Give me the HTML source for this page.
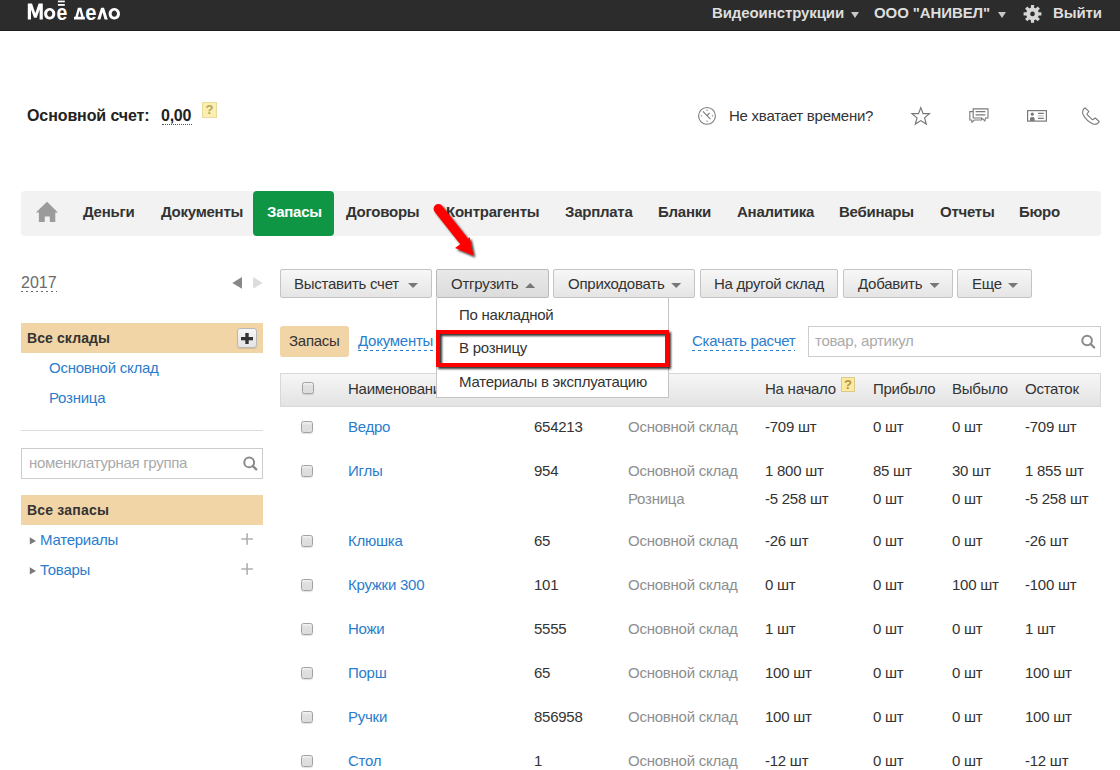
<!DOCTYPE html>
<html><head><meta charset="utf-8">
<style>
*{box-sizing:border-box;}
html,body{margin:0;padding:0;background:#fff;}
body{width:1120px;height:770px;overflow:hidden;position:relative;font-family:"Liberation Sans",sans-serif;color:#333;font-size:15px;letter-spacing:-0.25px;}
.a{position:absolute;white-space:nowrap;line-height:20px;}
.hdr{position:absolute;left:0;top:0;width:1120px;height:31px;background:#2c2c2c;border-bottom:1px solid #1c1c1c;}
.hl{color:#dedede;font-weight:bold;font-size:15px;letter-spacing:-0.1px;}
.b{font-weight:bold;}
.nav{position:absolute;left:21px;top:191px;width:1080px;height:45px;background:#f2f2f2;border-radius:4px;}
.ni{position:absolute;top:203px;font-weight:bold;font-size:15px;color:#333;}
.tab{position:absolute;left:253px;top:191px;width:81px;height:45px;background:#0e9645;border-radius:4px;}
.lnk{color:#2a7dcc;}
.gray{color:#8e8e8e;}
.btn{position:absolute;top:269px;height:29px;border:1px solid #c4c4c4;border-radius:2px;background:linear-gradient(#f7f7f7,#e5e5e5);}
.btn.on{background:linear-gradient(#e9e9e9,#dcdcdc);border-color:#b9b9b9;}
.tri{position:absolute;width:0;height:0;border-left:5px solid transparent;border-right:5px solid transparent;border-top:5px solid #777;}
.triu{position:absolute;width:0;height:0;border-left:5px solid transparent;border-right:5px solid transparent;border-bottom:5px solid #777;}
.sand{position:absolute;background:#f2d5a6;}
.cb{position:absolute;width:12px;height:12px;border:1px solid #a2a2a2;border-radius:2.5px;background:linear-gradient(#f2f2f2,#e0e0e0 3px,#dcdcdc);box-shadow:0 1px 1px rgba(0,0,0,.12);}
.r{position:absolute;white-space:nowrap;line-height:20px;}
.q{position:absolute;border:1px solid;font-weight:bold;font-size:13px;line-height:13px;text-align:center;letter-spacing:0;}
.dash{position:relative;display:inline-block;}
.dash::after{content:"";position:absolute;left:0;right:0;top:19px;height:1px;background:linear-gradient(90deg,currentColor 50%,transparent 50%);background-size:6px 1px;}
.dash.d18::after{top:18px;background-size:5px 1px;}
</style></head><body>

<!-- header -->
<div class="hdr"></div>
<div class="a hl" style="left:712px;top:3px;">Видеоинструкции</div>
<div class="tri" style="left:851px;top:12px;border-top-color:#c8c8c8;border-left-width:4px;border-right-width:4px;border-top-width:6px;"></div>
<div class="a hl" style="left:874px;top:3px;">ООО "АНИВЕЛ"</div>
<div class="tri" style="left:998px;top:12px;border-top-color:#c8c8c8;border-left-width:4px;border-right-width:4px;border-top-width:6px;"></div>
<div class="a hl" style="left:1053px;top:3px;">Выйти</div>

<!-- account -->
<div class="a b" style="left:27px;top:106px;font-size:16px;color:#222;letter-spacing:-0.1px;">Основной счет:</div>
<div class="a b" style="left:161px;top:106px;font-size:16px;color:#222;">0,00</div>
<div class="a" style="left:162px;top:124px;width:30px;height:0;border-top:1px dotted #555;"></div>
<div class="q" style="left:202px;top:102px;width:15px;height:16px;background:#faeeb0;border-color:#eadb9c;color:#b5a55e;">?</div>

<div class="a" style="left:729px;top:106px;color:#333;">Не хватает времени?</div>

<!-- nav -->
<div class="nav"></div>
<div class="tab"></div>
<div class="ni" style="left:83px;">Деньги</div>
<div class="ni" style="left:161px;">Документы</div>
<div class="ni" style="left:267px;color:#fff;">Запасы</div>
<div class="ni" style="left:346px;">Договоры</div>
<div class="ni" style="left:446px;">Контрагенты</div>
<div class="ni" style="left:565px;">Зарплата</div>
<div class="ni" style="left:658px;">Бланки</div>
<div class="ni" style="left:737px;">Аналитика</div>
<div class="ni" style="left:839px;">Вебинары</div>
<div class="ni" style="left:940px;">Отчеты</div>
<div class="ni" style="left:1019px;">Бюро</div>

<!-- sidebar -->
<div class="a" style="left:21px;top:273px;font-size:16px;color:#6a6a6a;letter-spacing:0;"><span class="dash d18">2017</span></div>
<div class="sand" style="left:21px;top:323px;width:242px;height:30px;"></div>
<div class="a b" style="left:27px;top:328px;font-size:14px;letter-spacing:0.1px;">Все склады</div>
<div class="a" style="left:237px;top:328px;width:20px;height:20px;border:1px solid #b9b9b9;border-radius:3px;background:linear-gradient(#f6f6f6,#e4e4e4);box-shadow:0 1px 1px rgba(0,0,0,.12);"></div>

<div class="a lnk" style="left:49px;top:358px;">Основной склад</div>
<div class="a lnk" style="left:49px;top:388px;">Розница</div>
<div class="a" style="left:21px;top:430px;width:242px;height:1px;background:#ddd;"></div>
<div class="a" style="left:21px;top:448px;width:242px;height:31px;border:1px solid #ccc;"></div>
<div class="a" style="left:29px;top:453px;font-size:15px;letter-spacing:-0.3px;color:#aaa;">номенклатурная группа</div>
<div class="sand" style="left:21px;top:495px;width:242px;height:30px;"></div>
<div class="a b" style="left:27px;top:500px;font-size:14px;letter-spacing:0.2px;">Все запасы</div>
<div class="a lnk" style="left:40px;top:530px;">Материалы</div>
<div class="a lnk" style="left:40px;top:560px;">Товары</div>

<!-- toolbar -->
<div class="btn" style="left:280px;width:152px;"></div>
<div class="a" style="left:294px;top:274px;">Выставить счет</div>
<div class="btn on" style="left:436px;width:113px;"></div>
<div class="a" style="left:451px;top:274px;">Отгрузить</div>
<div class="btn" style="left:553px;width:142px;"></div>
<div class="a" style="left:568px;top:274px;">Оприходовать</div>
<div class="btn" style="left:700px;width:138px;"></div>
<div class="a" style="left:714px;top:274px;">На другой склад</div>
<div class="btn" style="left:843px;width:110px;"></div>
<div class="a" style="left:858px;top:274px;">Добавить</div>
<div class="btn" style="left:957px;width:75px;"></div>
<div class="a" style="left:972px;top:274px;">Еще</div>

<!-- subbar -->
<div class="sand" style="left:280px;top:326px;width:69px;height:31px;border-radius:3px;"></div>
<div class="a" style="left:289px;top:331px;">Запасы</div>
<div class="a lnk" style="left:358px;top:331px;"><span class="dash">Документы</span></div>
<div class="a lnk" style="left:692px;top:331px;"><span class="dash">Скачать расчет</span></div>
<div class="a" style="left:808px;top:326px;width:293px;height:31px;border:1px solid #ccc;"></div>
<div class="a" style="left:815px;top:331px;color:#aaa;">товар, артикул</div>

<!-- table header -->
<div class="a" style="left:280px;top:373px;width:821px;height:34px;background:linear-gradient(#f6f6f6,#e3e3e3);border:1px solid #d8d8d8;"></div>
<div class="cb" style="left:302px;top:382px;"></div>
<div class="a" style="left:348px;top:379px;">Наименование</div>
<div class="a" style="left:765px;top:379px;">На начало</div>
<div class="a" style="left:873px;top:379px;">Прибыло</div>
<div class="a" style="left:952px;top:379px;">Выбыло</div>
<div class="a" style="left:1025px;top:379px;">Остаток</div>
<div class="q" style="left:841px;top:377px;width:14px;height:15px;background:#fde9a0;border-color:#d9c98c;color:#b39540;">?</div>

<!-- dropdown -->
<div class="a" style="left:436px;top:298px;width:233px;height:100px;background:#fff;border:1px solid #c4c4c4;border-top:none;"></div>
<div class="a" style="left:459px;top:305px;">По накладной</div>
<div class="a" style="left:459px;top:338px;">В розницу</div>
<div class="a" style="left:459px;top:372px;">Материалы в эксплуатацию</div>


<svg style="position:absolute;left:0;top:0;" width="1120" height="770" viewBox="0 0 1120 770">
<defs>
<filter id="sh" x="-20%" y="-20%" width="140%" height="140%"><feGaussianBlur in="SourceAlpha" stdDeviation="1"/><feOffset dx="2" dy="2"/><feComponentTransfer><feFuncA type="linear" slope="0.8"/></feComponentTransfer><feMerge><feMergeNode/><feMergeNode in="SourceGraphic"/></feMerge></filter>
</defs>
<!-- logo -->
<g fill="#fff">
<path d="M27.8,19.6 V3.6 H32 L35.3,13.2 L38.6,3.6 H42.8 V19.6 H39.6 V9.5 L36.7,17.8 H34 L31,9.5 V19.6 Z"/>
<path fill-rule="evenodd" d="M49.7,7.9 A5.6,5.85 0 1 1 49.69,7.9 Z M49.7,10.6 A2.6,3.1 0 1 0 49.71,10.6 Z"/>
<rect x="57.9" y="0.6" width="6.9" height="1.7"/>
<rect x="57.9" y="4" width="6.9" height="1.8"/>
<path d="M74,19.6 H84.9 V16.8 H83.7 L81.3,7.8 H77.9 L75.4,16.8 H74 Z M77.9,16.8 L79.6,10.6 L81.2,16.8 Z" fill-rule="evenodd"/>
<path d="M97.2,19.6 L101.1,7.8 H104 L107.8,19.6 H104.6 L102.5,12.2 L100.4,19.6 Z"/>
<path fill-rule="evenodd" d="M114.3,7.9 A5.7,5.85 0 1 1 114.29,7.9 Z M114.3,10.6 A2.7,3.1 0 1 0 114.31,10.6 Z"/>
</g>
<text x="56.6" y="19.6" font-family="Liberation Sans" font-weight="bold" font-size="21.5" fill="#fff" textLength="10.6" lengthAdjust="spacingAndGlyphs">е</text>
<text x="85.3" y="19.6" font-family="Liberation Sans" font-weight="bold" font-size="21.5" fill="#fff" textLength="11" lengthAdjust="spacingAndGlyphs">е</text>
<!-- gear -->
<g fill="#d6d6d6" transform="translate(1032.5,13.9)">
<circle r="6.4"/>
<rect x="-1.6" y="-8.9" width="3.2" height="17.8"/>
<rect x="-1.6" y="-8.9" width="3.2" height="17.8" transform="rotate(45)"/>
<rect x="-1.6" y="-8.9" width="3.2" height="17.8" transform="rotate(90)"/>
<rect x="-1.6" y="-8.9" width="3.2" height="17.8" transform="rotate(135)"/>
<circle r="2.3" fill="#2c2c2c"/>
</g>
<!-- clock -->
<g stroke="#7a7a7a" fill="none" stroke-width="1.1">
<circle cx="707" cy="115.9" r="8.4"/>
<path d="M702.9,111.4 L707,115.7 L710.4,119.2 M707,115.7 L709.6,113"/>
<path d="M707,109.6 V111 M707,120.6 V122 M700.8,115.9 H702.1 M711.9,115.9 H713.2" stroke-width="1"/>
</g>
<!-- star -->
<path d="M920.8,107.6 L923.1,113.7 L929.4,113.7 L924.6,117.9 L926.3,124.1 L920.8,120.6 L915.3,124.1 L917,117.9 L912,113.7 L918.5,113.7 Z" fill="none" stroke="#777" stroke-width="1.2" stroke-linejoin="miter"/>
<!-- chat -->
<g fill="none" stroke="#7a7a7a" stroke-width="1.1">
<path d="M973.2,108.9 H988 V118 H985.5 L984.9,121 L981.8,118 H973.2 Z"/>
<path d="M973.2,111.6 H969.8 V120 H971.5 L972,122.2 L974.3,120 H981.5 L981.8,118"/>
<path d="M975.6,111.6 H985.3 M975.6,114.8 H985.3" stroke-width="1.3"/>
</g>
<!-- id card -->
<g fill="none" stroke="#7a7a7a" stroke-width="1.2">
<rect x="1027.6" y="110.6" width="18.8" height="10.5"/>
<path d="M1037.9,113.4 H1043.8 M1037.9,118.4 H1043.8"/>
<path d="M1037.9,115.9 H1043.8" stroke="#c4c4c4"/>
</g>
<circle cx="1032.3" cy="114.2" r="1.6" fill="#7a7a7a"/>
<path d="M1030,121 V118.4 Q1030,117 1032.3,117 Q1034.6,117 1034.6,118.4 V121 Z" fill="#7a7a7a"/>
<!-- phone -->
<path d="M1085.1,107.8 L1088.8,111.4 L1086.9,114.3 L1092.6,119.8 L1095.3,118 L1099.2,121.5 Q1098.2,124.4 1093.7,124.2 Q1086.5,121.5 1082.8,114 Q1082,109.8 1085.1,107.8 Z" fill="none" stroke="#7a7a7a" stroke-width="1.1" stroke-linejoin="round"/>
<!-- house -->
<path d="M47,201.7 L58,212.6 H55.3 V222 H49.8 V216.5 H44.8 V222 H38.9 V212.6 H35.9 Z" fill="#9b9b9b"/>
<!-- sidebar arrows -->
<path d="M232.3,282.9 L242,276.9 V288.8 Z" fill="#888"/>
<path d="M262.6,282.9 L253.1,276.9 V288.8 Z" fill="#dcdcdc"/>
<!-- button arrows -->
<g fill="#777">
<path d="M408,283 H418 L413,288 Z"/>
<path d="M525.2,288 H535.2 L530.2,283 Z"/>
<path d="M671.2,283 H681.2 L676.2,288 Z"/>
<path d="M929.6,283 H939.6 L934.6,288 Z"/>
<path d="M1008,283 H1018 L1013,288 Z"/>
</g>
<!-- sidebar tree arrows and pluses -->
<rect x="241" y="337" width="12" height="3.3" fill="#333"/><rect x="245.3" y="333" width="3.4" height="11" fill="#333"/>
<g fill="#7a7a7a">
<path d="M29.8,537.2 L36,540.9 L29.8,544.6 Z"/>
<path d="M29.8,567.2 L36,570.9 L29.8,574.6 Z"/>
</g>
<g stroke="#b0b0b0" stroke-width="1.6">
<path d="M241.3,539 H252.9 M247.1,533.2 V544.8"/>
<path d="M241.3,569 H252.9 M247.1,563.2 V574.8"/>
</g>
<!-- magnifiers -->
<g fill="none" stroke="#8a8a8a" stroke-width="2">
<circle cx="1087.1" cy="340.5" r="4.8"/>
<path d="M1090.6,344 L1094.2,347.5" stroke-linecap="round" stroke-width="2.3"/>
<circle cx="249.2" cy="462.4" r="4.9"/>
<path d="M252.7,465.9 L256.2,469.4" stroke-linecap="round" stroke-width="2.3"/>
</g>
<!-- red rect -->
<rect x="438" y="332" width="229" height="33" fill="none" stroke="#f00" stroke-width="4" filter="url(#sh)"/>
<!-- red arrow -->
<g filter="url(#sh)">
<path d="M438.3,208.7 L463,240" stroke="#f00" stroke-width="9.5" stroke-linecap="round"/>
<path d="M455,247.9 L469.6,237.2 L473.3,255.6 Z" fill="#f00"/>
</g>
</svg>

<!-- rows -->
<div class="cb" style="left:301px;top:421px;"></div>
<div class="r lnk" style="left:348px;top:417px;">Ведро</div>
<div class="r" style="left:534px;top:417px;">654213</div>
<div class="r gray" style="left:628px;top:417px;">Основной склад</div>
<div class="r" style="left:765px;top:417px;">-709 шт</div>
<div class="r" style="left:873px;top:417px;">0 шт</div>
<div class="r" style="left:952px;top:417px;">0 шт</div>
<div class="r" style="left:1025px;top:417px;">-709 шт</div>
<div class="cb" style="left:301px;top:465px;"></div>
<div class="r lnk" style="left:348px;top:461px;">Иглы</div>
<div class="r" style="left:534px;top:461px;">954</div>
<div class="r gray" style="left:628px;top:461px;">Основной склад</div>
<div class="r" style="left:765px;top:461px;">1 800 шт</div>
<div class="r" style="left:873px;top:461px;">85 шт</div>
<div class="r" style="left:952px;top:461px;">30 шт</div>
<div class="r" style="left:1025px;top:461px;">1 855 шт</div>
<div class="r gray" style="left:628px;top:489px;">Розница</div>
<div class="r" style="left:765px;top:489px;">-5 258 шт</div>
<div class="r" style="left:873px;top:489px;">0 шт</div>
<div class="r" style="left:952px;top:489px;">0 шт</div>
<div class="r" style="left:1025px;top:489px;">-5 258 шт</div>
<div class="cb" style="left:301px;top:535px;"></div>
<div class="r lnk" style="left:348px;top:531px;">Клюшка</div>
<div class="r" style="left:534px;top:531px;">65</div>
<div class="r gray" style="left:628px;top:531px;">Основной склад</div>
<div class="r" style="left:765px;top:531px;">-26 шт</div>
<div class="r" style="left:873px;top:531px;">0 шт</div>
<div class="r" style="left:952px;top:531px;">0 шт</div>
<div class="r" style="left:1025px;top:531px;">-26 шт</div>
<div class="cb" style="left:301px;top:579px;"></div>
<div class="r lnk" style="left:348px;top:575px;">Кружки 300</div>
<div class="r" style="left:534px;top:575px;">101</div>
<div class="r gray" style="left:628px;top:575px;">Основной склад</div>
<div class="r" style="left:765px;top:575px;">0 шт</div>
<div class="r" style="left:873px;top:575px;">0 шт</div>
<div class="r" style="left:952px;top:575px;">100 шт</div>
<div class="r" style="left:1025px;top:575px;">-100 шт</div>
<div class="cb" style="left:301px;top:623px;"></div>
<div class="r lnk" style="left:348px;top:619px;">Ножи</div>
<div class="r" style="left:534px;top:619px;">5555</div>
<div class="r gray" style="left:628px;top:619px;">Основной склад</div>
<div class="r" style="left:765px;top:619px;">1 шт</div>
<div class="r" style="left:873px;top:619px;">0 шт</div>
<div class="r" style="left:952px;top:619px;">0 шт</div>
<div class="r" style="left:1025px;top:619px;">1 шт</div>
<div class="cb" style="left:301px;top:667px;"></div>
<div class="r lnk" style="left:348px;top:663px;">Порш</div>
<div class="r" style="left:534px;top:663px;">65</div>
<div class="r gray" style="left:628px;top:663px;">Основной склад</div>
<div class="r" style="left:765px;top:663px;">100 шт</div>
<div class="r" style="left:873px;top:663px;">0 шт</div>
<div class="r" style="left:952px;top:663px;">0 шт</div>
<div class="r" style="left:1025px;top:663px;">100 шт</div>
<div class="cb" style="left:301px;top:711px;"></div>
<div class="r lnk" style="left:348px;top:707px;">Ручки</div>
<div class="r" style="left:534px;top:707px;">856958</div>
<div class="r gray" style="left:628px;top:707px;">Основной склад</div>
<div class="r" style="left:765px;top:707px;">100 шт</div>
<div class="r" style="left:873px;top:707px;">0 шт</div>
<div class="r" style="left:952px;top:707px;">0 шт</div>
<div class="r" style="left:1025px;top:707px;">100 шт</div>
<div class="cb" style="left:301px;top:755px;"></div>
<div class="r lnk" style="left:348px;top:751px;">Стол</div>
<div class="r" style="left:534px;top:751px;">1</div>
<div class="r gray" style="left:628px;top:751px;">Основной склад</div>
<div class="r" style="left:765px;top:751px;">-12 шт</div>
<div class="r" style="left:873px;top:751px;">0 шт</div>
<div class="r" style="left:952px;top:751px;">0 шт</div>
<div class="r" style="left:1025px;top:751px;">-12 шт</div>
</body></html>
